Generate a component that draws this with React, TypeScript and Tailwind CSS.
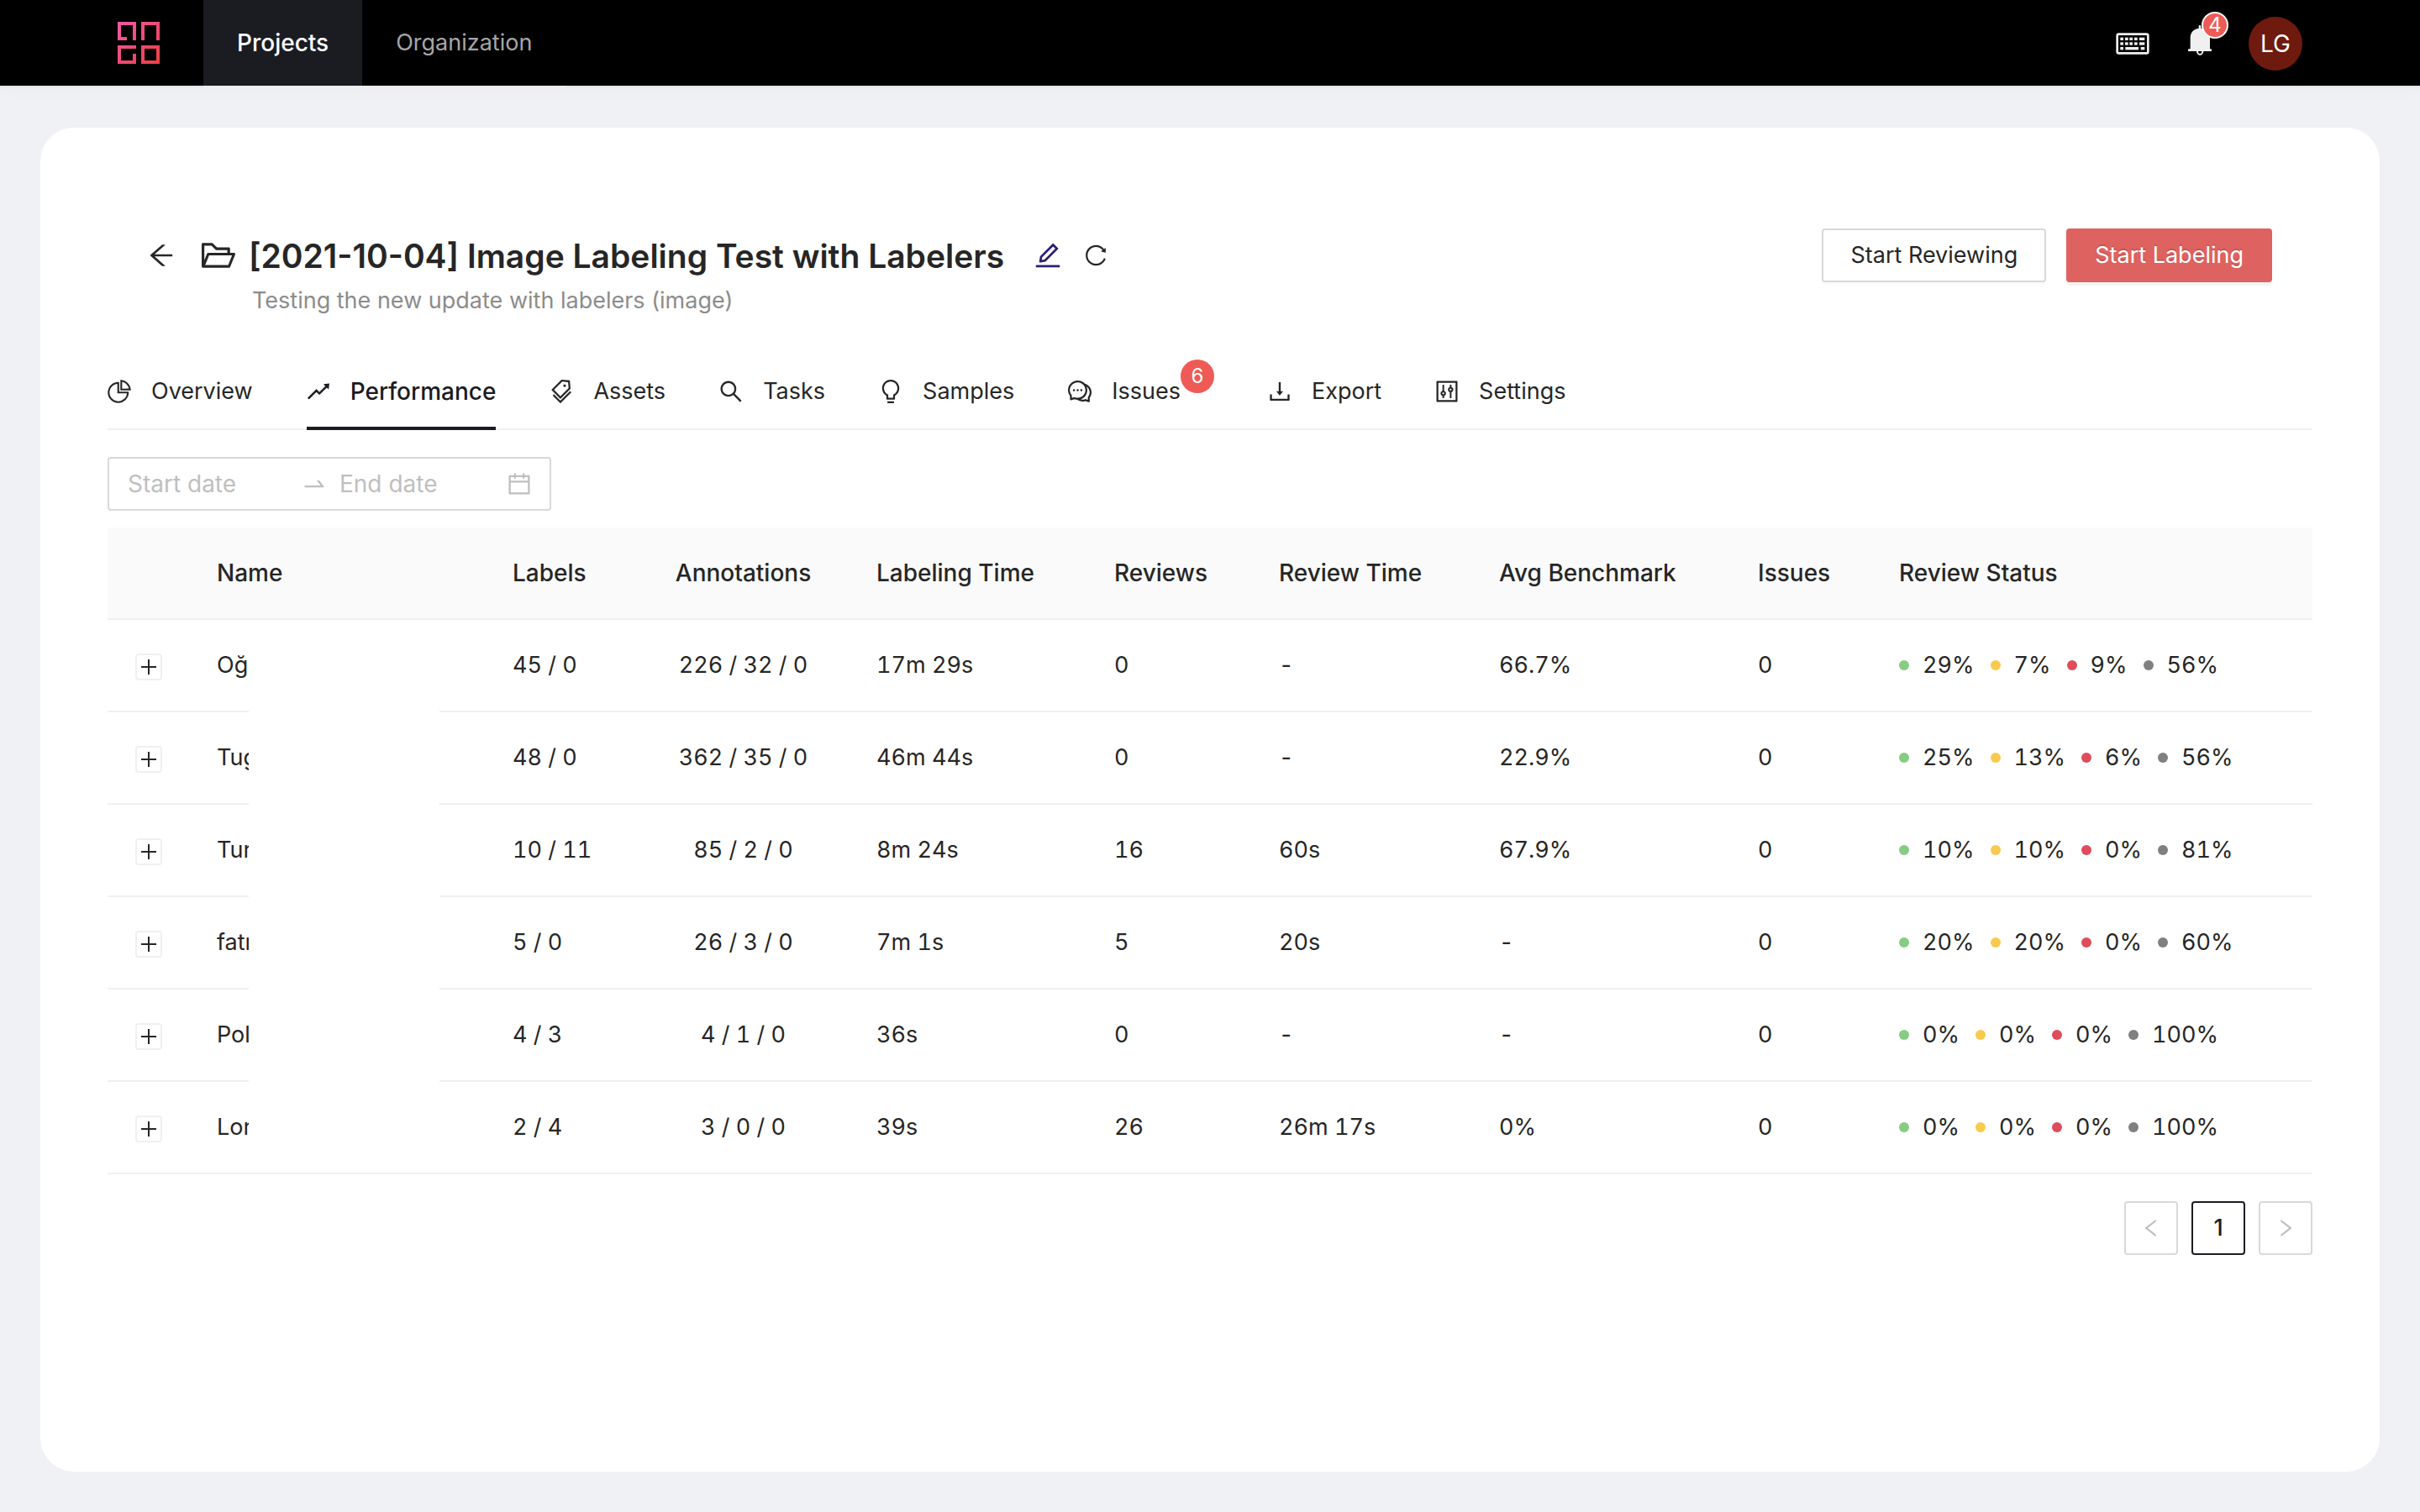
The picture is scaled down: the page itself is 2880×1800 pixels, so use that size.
import React from "react";
import type { IconType } from "react-icons";
import {
  AiOutlineArrowLeft,
  AiOutlineBulb,
  AiOutlineCalendar,
  AiOutlineComment,
  AiOutlineControl,
  AiOutlineDownload,
  AiOutlineEdit,
  AiOutlineFolderOpen,
  AiOutlineLeft,
  AiOutlinePieChart,
  AiOutlineReload,
  AiOutlineRight,
  AiOutlineRise,
  AiOutlineSearch,
  AiOutlineSwapRight,
  AiOutlineTags,
} from "react-icons/ai";

type Tab = { label: string; icon: IconType; active?: boolean; count?: number };

const tabs: Tab[] = [
  { label: "Overview", icon: AiOutlinePieChart },
  { label: "Performance", icon: AiOutlineRise, active: true },
  { label: "Assets", icon: AiOutlineTags },
  { label: "Tasks", icon: AiOutlineSearch },
  { label: "Samples", icon: AiOutlineBulb },
  { label: "Issues", icon: AiOutlineComment, count: 6 },
  { label: "Export", icon: AiOutlineDownload },
  { label: "Settings", icon: AiOutlineControl },
];

type Row = {
  name: string;
  labels: string;
  annotations: string;
  labelingTime: string;
  reviews: string;
  reviewTime: string;
  benchmark: string;
  issues: string;
  status: string[];
};

const rows: Row[] = [
  { name: "Oğ", labels: "45 / 0", annotations: "226 / 32 / 0", labelingTime: "17m 29s", reviews: "0", reviewTime: "-", benchmark: "66.7%", issues: "0", status: ["29%", "7%", "9%", "56%"] },
  { name: "Tug", labels: "48 / 0", annotations: "362 / 35 / 0", labelingTime: "46m 44s", reviews: "0", reviewTime: "-", benchmark: "22.9%", issues: "0", status: ["25%", "13%", "6%", "56%"] },
  { name: "Tur", labels: "10 / 11", annotations: "85 / 2 / 0", labelingTime: "8m 24s", reviews: "16", reviewTime: "60s", benchmark: "67.9%", issues: "0", status: ["10%", "10%", "0%", "81%"] },
  { name: "fatm", labels: "5 / 0", annotations: "26 / 3 / 0", labelingTime: "7m 1s", reviews: "5", reviewTime: "20s", benchmark: "-", issues: "0", status: ["20%", "20%", "0%", "60%"] },
  { name: "Pol", labels: "4 / 3", annotations: "4 / 1 / 0", labelingTime: "36s", reviews: "0", reviewTime: "-", benchmark: "-", issues: "0", status: ["0%", "0%", "0%", "100%"] },
  { name: "Lor", labels: "2 / 4", annotations: "3 / 0 / 0", labelingTime: "39s", reviews: "26", reviewTime: "26m 17s", benchmark: "0%", issues: "0", status: ["0%", "0%", "0%", "100%"] },
];

const dotColors = ["bg-[#87cc83]", "bg-[#f8ca4d]", "bg-[#df4c5b]", "bg-[#808080]"];

/** Ant icon cropped to its live area, without the built-in margin. */
function Glyph({ icon: Icon, className }: { icon: IconType; className: string }) {
  return <Icon viewBox="64 64 896 896" className={`shrink-0 ${className}`} aria-hidden="true" />;
}

function Logo() {
  return (
    <svg width="50" height="50" viewBox="0 0 50 50" fill="none" aria-hidden="true">
      <defs>
        <linearGradient id="logo" x1="0" y1="0" x2="50" y2="50" gradientUnits="userSpaceOnUse">
          <stop stopColor="#f05aa6" />
          <stop offset="0.5" stopColor="#ee4a78" />
          <stop offset="1" stopColor="#ef4040" />
        </linearGradient>
      </defs>
      <g stroke="url(#logo)" strokeWidth="4">
        <path d="M11 20H2V2H20V22" />
        <path d="M30 22V2H48V22" />
        <path d="M22 30H2V48H20V38" />
        <path d="M30 30H48V48H30Z" />
      </g>
    </svg>
  );
}

function KeyboardIcon() {
  return (
    <svg width="40" height="26" viewBox="0 0 120 78" fill="#f0f0f0" aria-hidden="true">
      <rect x="5" y="5" width="110" height="68" rx="5" fill="none" stroke="#f0f0f0" strokeWidth="8" />
      {[16, 33, 49, 66].map((x) => (
        <g key={x}>
          <rect x={x} y="17" width="11" height="10" />
          <rect x={x} y="34" width="11" height="10" />
        </g>
      ))}
      <rect x="84" y="17" width="19" height="10" />
      <rect x="84" y="34" width="19" height="10" />
      <rect x="16" y="51" width="11" height="10" />
      <rect x="34" y="51" width="47" height="10" />
      <rect x="89" y="51" width="14" height="10" />
    </svg>
  );
}

function BellIcon() {
  return (
    <svg width="28" height="36" viewBox="0 0 84 108" fill="#f0f0f0" aria-hidden="true">
      <path d="M38 4a4 4 0 0 1 8 0v7c18 2 32 15 32 34v40h4a2 2 0 0 1 2 2v6H0v-6a2 2 0 0 1 2-2h6V45C8 26 20 13 38 11z" />
      <path d="M33 93a9 11 0 0 0 19 0" fill="none" stroke="#f0f0f0" strokeWidth="6" />
    </svg>
  );
}

function TopBar() {
  return (
    <header className="flex h-[102px] items-center bg-black px-[140px] text-[28px] shadow-[0_2px_0_#e5e6ec,0_4px_16px_#ececec]">
      <a href="#home" aria-label="Home">
        <Logo />
      </a>
      <nav className="ml-[52px] flex h-full shadow-[0_2px_0_#ededef]">
        <a href="#projects" className="flex items-center bg-[#1b1c22] px-10 font-medium text-white">
          Projects
        </a>
        <a href="#organization" className="flex items-center px-10 text-[27px] text-[#a6a6a6]">
          Organization
        </a>
      </nav>
      <div className="ml-auto flex items-center gap-11 pt-0.5">
        <button type="button" aria-label="Keyboard shortcuts" className="mr-0.5">
          <KeyboardIcon />
        </button>
        <button type="button" aria-label="Notifications" className="relative mb-2">
          <BellIcon />
          <span className="absolute -top-4 left-4 flex size-8 items-center justify-center rounded-full border-2 border-white bg-[#ee5b56] text-2xl leading-none text-white">
            4
          </span>
        </button>
        <button type="button" className="size-16 rounded-full bg-[#6e1a0e] text-white">
          LG
        </button>
      </div>
    </header>
  );
}

function ProjectHeader() {
  return (
    <div className="px-12">
      <div className="flex h-16 items-center">
        <button type="button" aria-label="Back">
          <Glyph icon={AiOutlineArrowLeft} className="size-8" />
        </button>
        <Glyph icon={AiOutlineFolderOpen} className="ml-8 size-10" />
        <h1 className="ml-4 text-[39px] leading-none font-semibold">[2021-10-04] Image Labeling Test with Labelers</h1>
        <button type="button" aria-label="Edit" className="ml-9 text-[#2a1f75]">
          <Glyph icon={AiOutlineEdit} className="size-8" />
        </button>
        <button type="button" aria-label="Reload" className="ml-7">
          <Glyph icon={AiOutlineReload} className="size-[26px]" />
        </button>
        <div className="ml-auto flex gap-6">
          <button type="button" className="h-16 rounded border-2 border-[#d9d9d9] px-8 shadow-[0_4px_0_rgba(0,0,0,0.015)]">
            Start Reviewing
          </button>
          <button
            type="button"
            className="h-16 rounded border-2 border-[#de625f] bg-[#de625f] px-8 text-white shadow-[0_4px_0_rgba(0,0,0,0.045)] text-shadow-[0_-2px_0_rgba(0,0,0,0.12)]"
          >
            Start Labeling
          </button>
        </div>
      </div>
      <p className="ml-[124px] text-[#8c8c8c]">Testing the new update with labelers (image)</p>
    </div>
  );
}

function Tabs() {
  return (
    <div role="tablist" className="mt-10 flex gap-16 shadow-[inset_0_-2px_0_#f0f0f0]">
      {tabs.map(({ label, icon, active, count }) => (
        <button
          key={label}
          type="button"
          role="tab"
          aria-selected={!!active}
          className={
            active
              ? "flex items-center gap-6 border-b-4 border-[#1b1c22] pt-6 pb-5 text-[28px] font-medium text-[#1b1c22]"
              : "flex items-center gap-6 pt-6 pb-6"
          }
        >
          <Glyph icon={icon} className="size-7" />
          <span className={count ? "relative mr-10" : ""}>
            {label}
            {count && (
              <span className="absolute -top-4 left-full flex size-10 items-center justify-center rounded-full bg-[#ee5b56] text-2xl leading-none text-white">
                {count}
              </span>
            )}
          </span>
        </button>
      ))}
    </div>
  );
}

function DateRange() {
  return (
    <div className="mt-8 flex h-16 w-[528px] items-center rounded border-2 border-[#d9d9d9] px-[22px] text-[28px] text-[#bfbfbf]">
      <input aria-label="Start date" placeholder="Start date" className="w-48 placeholder:text-[#bfbfbf]" />
      <Glyph icon={AiOutlineSwapRight} className="mx-4 size-7" />
      <input aria-label="End date" placeholder="End date" className="w-48 placeholder:text-[#bfbfbf]" />
      <Glyph icon={AiOutlineCalendar} className="ml-2 size-7" />
    </div>
  );
}

function PerformanceTable() {
  return (
    <table className="mt-5 w-full table-fixed border-separate border-spacing-0 tabular-nums [&_td]:h-[110px] [&_td]:border-b-2 [&_td]:border-[#f0f0f0] [&_td]:px-8 [&_th]:h-[110px] [&_th]:border-b-2 [&_th]:border-[#f0f0f0] [&_th]:px-8 [&_th]:font-medium">
      <colgroup>
        <col className="w-[98px]" />
        <col className="w-[352px]" />
        <col className="w-[180px]" />
        <col className="w-[253px]" />
        <col className="w-[283px]" />
        <col className="w-[196px]" />
        <col className="w-[262px]" />
        <col className="w-[308px]" />
        <col className="w-[168px]" />
        <col />
      </colgroup>
      <thead>
        <tr className="bg-[#fafafa] text-left text-[28px] whitespace-nowrap">
          <th aria-label="Expand" />
          <th>Name</th>
          <th>Labels</th>
          <th className="text-center">Annotations</th>
          <th>Labeling Time</th>
          <th>Reviews</th>
          <th>Review Time</th>
          <th>Avg Benchmark</th>
          <th>Issues</th>
          <th>Review Status</th>
        </tr>
      </thead>
      <tbody>
        {rows.map((row, i) => (
          <tr key={row.name} className="whitespace-nowrap">
            <td>
              <button
                type="button"
                aria-label={`Expand ${row.name}`}
                className="mx-auto mt-1 flex size-8 items-center justify-center rounded-sm border-2 border-[#f0f0f0]"
              >
                <svg width="18" height="18" viewBox="0 0 18 18" stroke="#262626" strokeWidth="2" aria-hidden="true">
                  <path d="M9 0V18M0 9H18" />
                </svg>
              </button>
            </td>
            <td className="relative">
              {row.name}
              <span
                className={
                  i < rows.length - 1
                    ? "absolute top-0 -bottom-0.5 left-[70px] w-[227px] bg-white"
                    : "absolute top-0 bottom-0 left-[70px] w-[227px] bg-white"
                }
              />
            </td>
            <td>{row.labels}</td>
            <td className="text-center">{row.annotations}</td>
            <td>{row.labelingTime}</td>
            <td>{row.reviews}</td>
            <td>{row.reviewTime}</td>
            <td>{row.benchmark}</td>
            <td>{row.issues}</td>
            <td>
              <div className="flex gap-[19px]">
                {row.status.map((value, n) => (
                  <span key={n} className="flex items-center gap-4">
                    <span className={`size-3 rounded-full ${dotColors[n]}`} />
                    {value}
                  </span>
                ))}
              </div>
            </td>
          </tr>
        ))}
      </tbody>
    </table>
  );
}

function Pagination() {
  const box = "flex size-16 items-center justify-center rounded border-2";
  return (
    <nav aria-label="Pagination" className="mt-8 flex justify-end gap-4">
      <button type="button" aria-label="Previous page" disabled className={`${box} border-[#d9d9d9] text-[#bfbfbf]`}>
        <Glyph icon={AiOutlineLeft} className="size-6" />
      </button>
      <button type="button" aria-current="page" className={`${box} border-[#1b1c22] font-medium text-[#1b1c22]`}>
        1
      </button>
      <button type="button" aria-label="Next page" disabled className={`${box} border-[#d9d9d9] text-[#bfbfbf]`}>
        <Glyph icon={AiOutlineRight} className="size-6" />
      </button>
    </nav>
  );
}

export default function App() {
  return (
    <div className="flex min-h-screen flex-col bg-[#f0f1f5] font-['Inter',sans-serif] text-[27px] leading-[44px] text-[#262626]">
      <TopBar />
      <main className="mx-12 mt-[50px] mb-12 flex-1 rounded-[40px] bg-white px-20 pt-[120px]">
        <ProjectHeader />
        <Tabs />
        <DateRange />
        <PerformanceTable />
        <Pagination />
      </main>
    </div>
  );
}
